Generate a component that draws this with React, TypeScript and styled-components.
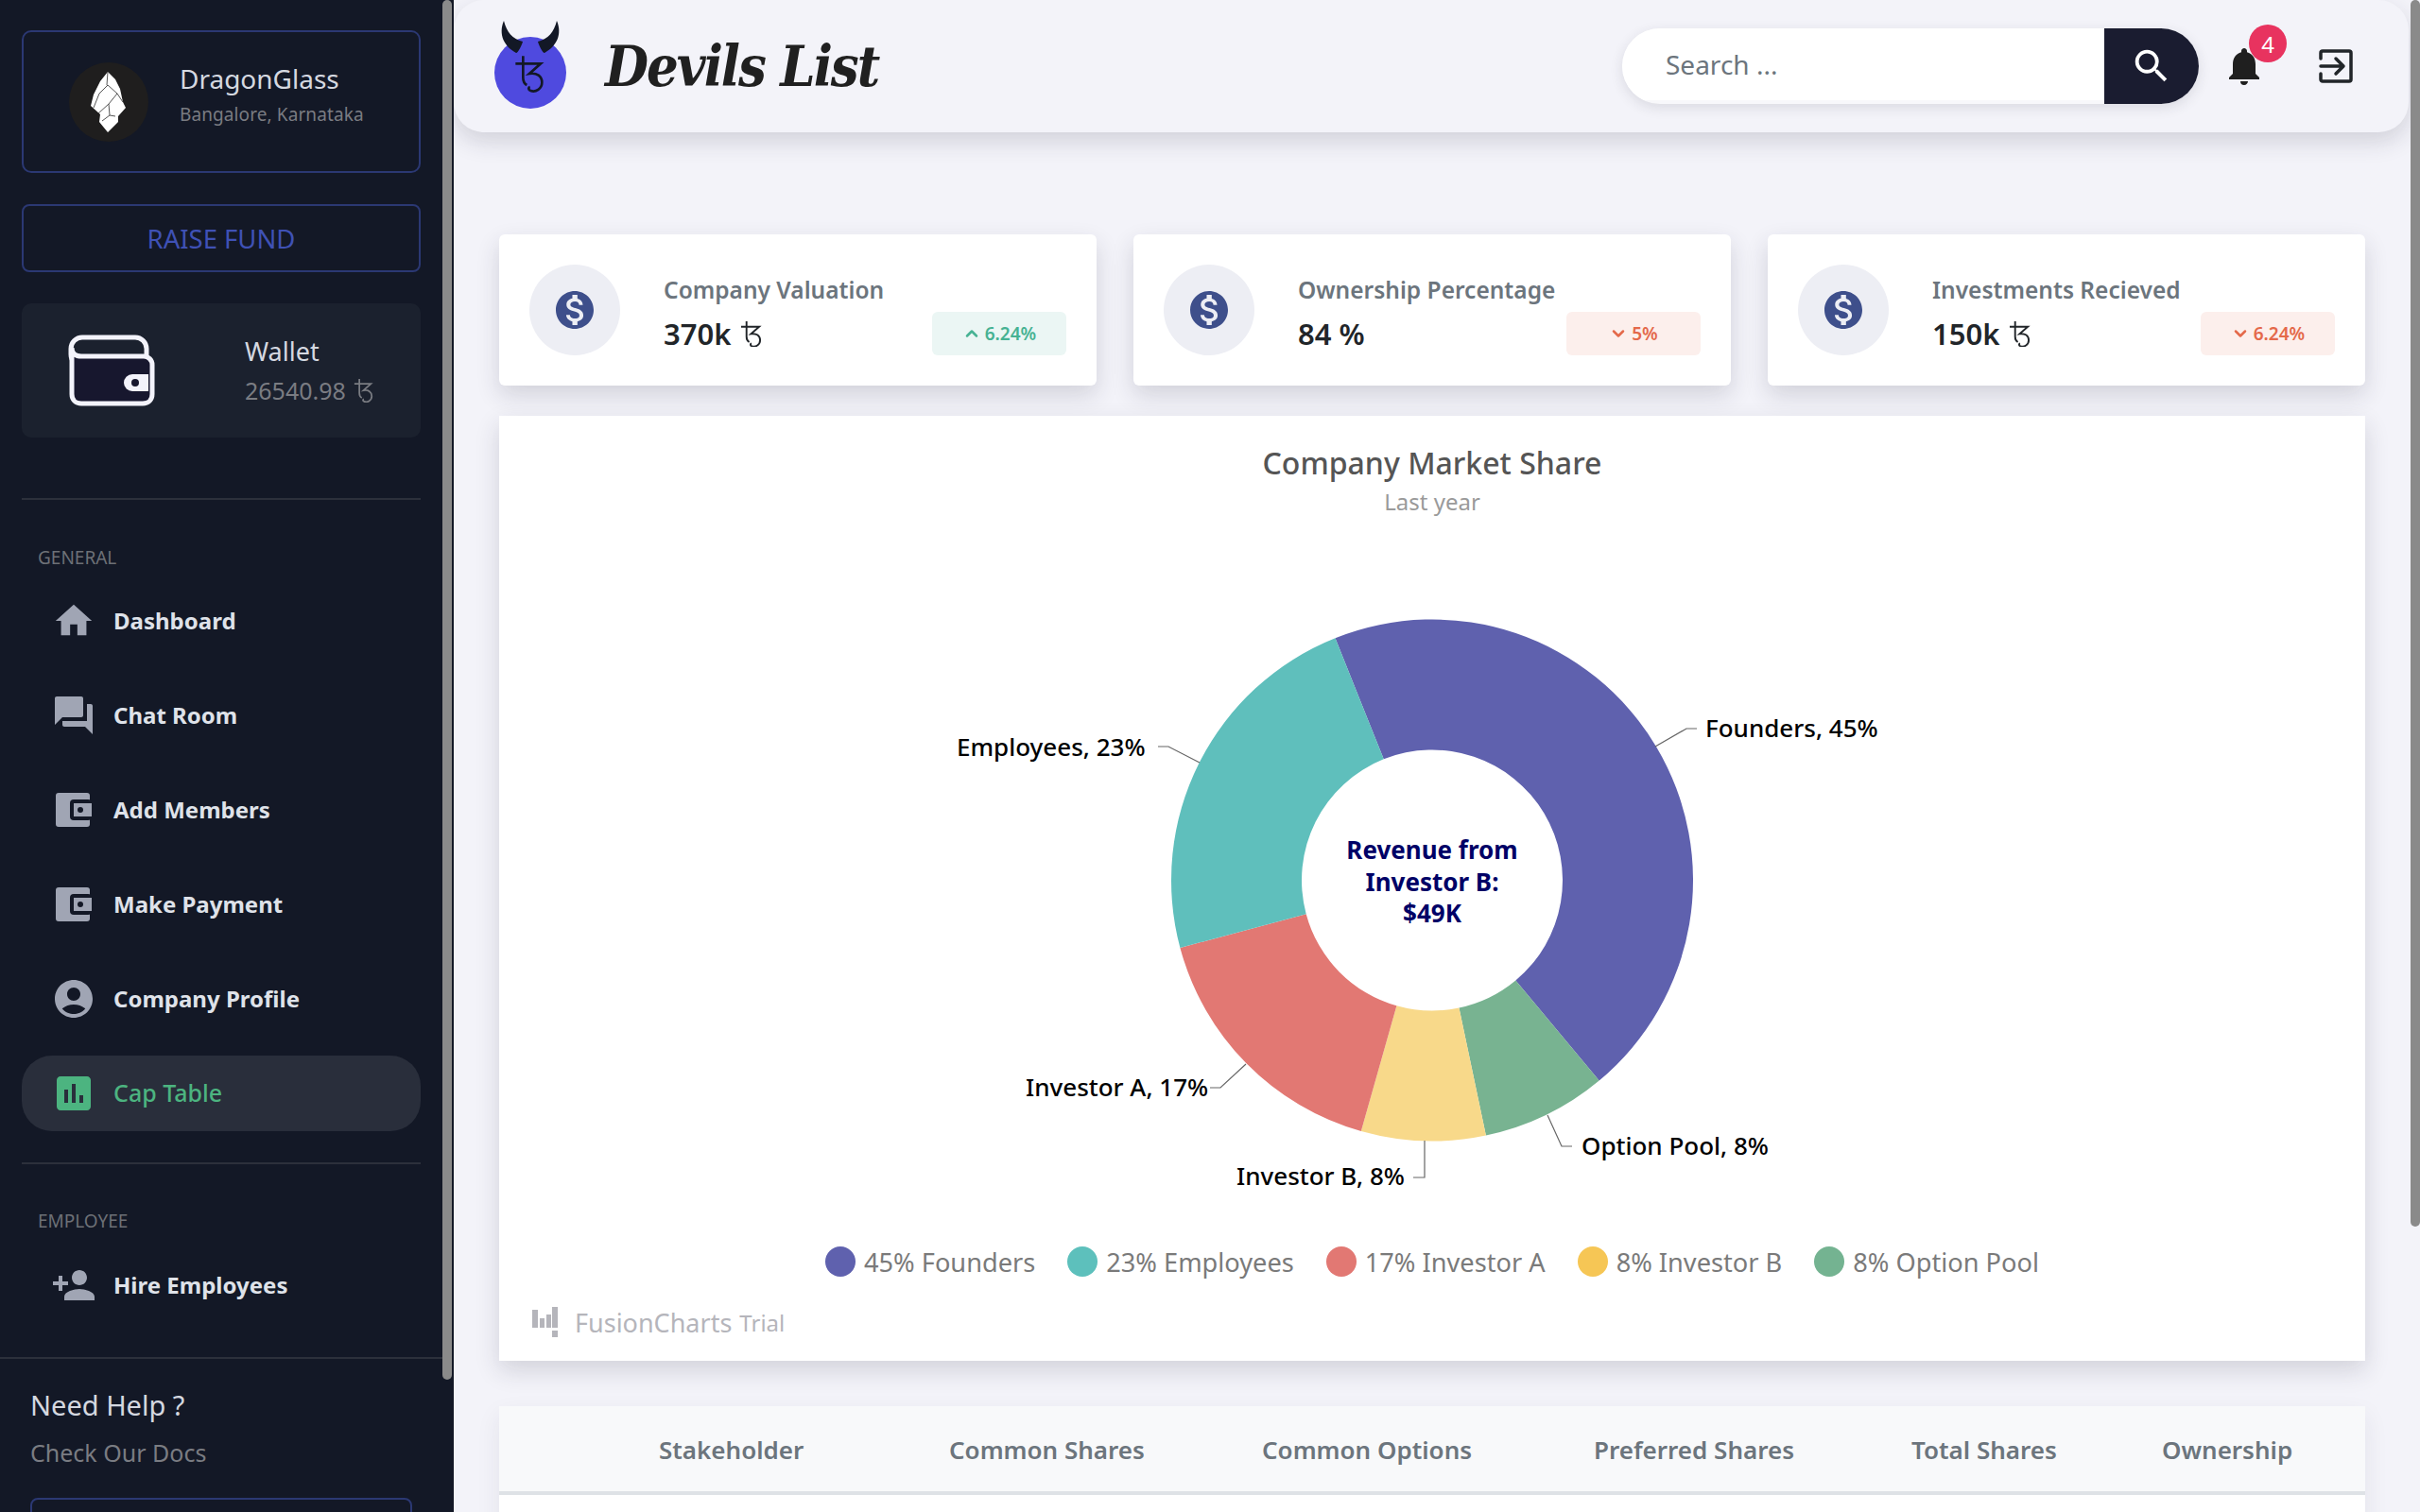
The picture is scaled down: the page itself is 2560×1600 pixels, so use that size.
import React from 'react'
import styled, { createGlobalStyle } from 'styled-components'
import { ChevronDown, ChevronUp } from 'lucide-react'
import {
  MdAccountCircle,
  MdAssessment,
  MdForum,
  MdHome,
  MdMonetizationOn,
  MdNotifications,
  MdPersonAdd,
  MdSearch
} from 'react-icons/md'

const colors = {
  sidebar: '#131826',
  page: '#f3f3f9',
  outline: '#2b3873',
  muted: '#7a7c82',
  soft: '#d5d8e0',
  navIcon: '#a0a5b4',
  green: '#4cb480',
  dark: '#212529',
  grey: '#6c757d'
}

const GlobalStyle = createGlobalStyle`
  html, body {
    margin: 0;
    height: 100%;
    overflow: hidden;
    background: ${colors.page};
    font-family: "Noto Sans", "Open Sans", sans-serif;
  }
  * { box-sizing: border-box; }
`

const Shell = styled.div`
  display: flex;
  height: 1600px;
  overflow: hidden;
`

const ScrollThumb = styled.div<{ $right: number; $height: number }>`
  position: absolute;
  top: 0;
  right: ${({ $right }) => $right}px;
  width: 10px;
  height: ${({ $height }) => $height}px;
  background: #8a8a8a;
  border-radius: 5px;
`

const Sidebar = styled.aside`
  position: relative;
  flex: 0 0 480px;
  height: 100%;
  overflow: hidden;
  background: ${colors.sidebar};
`

const SidebarTop = styled.div`
  padding: 32px 35px 0 23px;
`

const ProfileCard = styled.div`
  height: 151px;
  display: flex;
  align-items: center;
  gap: 33px;
  padding-left: 48px;
  border: 2px solid ${colors.outline};
  border-radius: 10px;
`

const Avatar = styled.div`
  width: 84px;
  height: 84px;
  flex: none;
  border-radius: 50%;
  background: #1f1e1e;
  display: flex;
  align-items: center;
  justify-content: center;
`

const ProfileText = styled.div`
  padding-bottom: 16px;
`

const ProfileName = styled.div`
  font-size: 28px;
  line-height: 36px;
  color: ${colors.soft};
`

const ProfilePlace = styled.div`
  font-size: 19px;
  line-height: 26px;
  margin-top: 7px;
  color: ${colors.muted};
  letter-spacing: 0.1px;
`

const OutlineButton = styled.button`
  display: block;
  width: 100%;
  height: 72px;
  background: transparent;
  border: 2px solid ${colors.outline};
  border-radius: 8px;
  color: #3f51b5;
  font-family: inherit;
  font-size: 27.5px;
`

const RaiseButton = styled(OutlineButton)`
  margin-top: 33px;
`

const WalletCard = styled.div`
  height: 142px;
  margin-top: 33px;
  display: flex;
  align-items: center;
  padding-left: 49px;
  gap: 95px;
  background: #1b212e;
  border-radius: 10px;
`

const WalletLabel = styled.div`
  font-size: 27px;
  line-height: 36px;
  color: ${colors.soft};
`

const WalletAmount = styled.div`
  display: flex;
  align-items: center;
  gap: 8px;
  font-size: 25px;
  line-height: 34px;
  margin-top: 6px;
  color: ${colors.muted};
`

const Divider = styled.hr`
  height: 2px;
  margin: 0;
  border: 0;
  background: #2c303b;
`

const TopDivider = styled(Divider)`
  margin-top: 64px;
`

const SectionLabel = styled.div<{ $top: number; $bottom: number }>`
  padding: ${({ $top }) => $top}px 17px ${({ $bottom }) => $bottom}px;
  font-size: 19px;
  line-height: 22px;
  color: #6d7076;
`

const NavRow = styled.a<{ $active?: boolean }>`
  height: 80px;
  margin-bottom: 20px;
  display: flex;
  align-items: center;
  gap: 22px;
  padding-left: 35px;
  border-radius: 32px;
  background: ${({ $active }) => ($active ? '#292e3b' : 'transparent')};
  color: ${({ $active }) => ($active ? colors.green : '#dfe2e9')};
  font-size: ${({ $active }) => ($active ? 25 : 24)}px;
  font-weight: ${({ $active }) => ($active ? 500 : 700)};
`

const NavText = styled.span`
  margin-top: -2px;
`

const NavIcon = styled.span<{ $active?: boolean }>`
  width: 40px;
  height: 40px;
  display: flex;
  align-items: center;
  justify-content: center;
  color: ${({ $active }) => ($active ? colors.green : colors.navIcon)};

  svg { flex: none; }
`

const DividerAfterNav = styled(Divider)`
  margin-top: 33px;
`

const FooterDivider = styled(Divider)`
  margin-top: 36px;
  margin-left: -23px;
  margin-right: -23px;
`

const SidebarFooter = styled.div`
  padding: 29px 44px 0 32px;
`

const HelpTitle = styled.div`
  font-size: 29px;
  line-height: 40px;
  color: ${colors.soft};
`

const HelpLink = styled.div`
  font-size: 25px;
  line-height: 36px;
  margin-top: 12px;
  color: ${colors.muted};
`

const DocsButton = styled(OutlineButton)`
  margin-top: 30px;
`

const Main = styled.main`
  position: relative;
  flex: 1;
  height: 100%;
  overflow: hidden;
  background: ${colors.page};
`

const Header = styled.header`
  height: 140px;
  margin-right: 12px;
  display: flex;
  align-items: center;
  padding: 0 59px 0 42px;
  background: ${colors.page};
  border-radius: 32px;
  box-shadow: 0 10px 24px rgba(40, 40, 60, 0.16);
`

const LogoTitle = styled.div`
  margin-left: 38px;
  font-family: "DejaVu Serif", serif;
  font-stretch: condensed;
  font-style: italic;
  font-weight: 700;
  font-size: 59px;
  letter-spacing: -2px;
  color: #202020;
`

const HeaderRight = styled.div`
  margin-left: auto;
  display: flex;
  align-items: center;
`

const SearchBox = styled.div`
  width: 610px;
  height: 80px;
  display: flex;
  border-radius: 40px;
  overflow: hidden;
  background: #f8f8fb;
  box-shadow: 0 4px 14px rgba(40, 40, 60, 0.12);
`

const SearchInput = styled.div`
  flex: 1;
  height: 76px;
  display: flex;
  align-items: center;
  padding-left: 46px;
  background: #fff;
  color: ${colors.grey};
  font-size: 28px;
`

const SearchButton = styled.div`
  width: 100px;
  display: flex;
  align-items: center;
  justify-content: center;
  background: #1a1c30;
  color: #fff;
`

const Bell = styled.div`
  position: relative;
  margin-left: 24px;
  height: 48px;
  color: #1f1f1f;
`

const BellBadge = styled.span`
  position: absolute;
  top: -20px;
  left: 29px;
  width: 40px;
  height: 40px;
  display: flex;
  align-items: center;
  justify-content: center;
  border-radius: 50%;
  background: #e8335f;
  color: #fff;
  font-size: 24px;
`

const ExitIcon = styled.svg`
  margin-left: 55px;
`

const Content = styled.div`
  padding: 108px 58px 0 48px;
`

const StatRow = styled.div`
  display: grid;
  grid-template-columns: repeat(3, 632px);
  justify-content: space-between;
`

const StatCard = styled.div`
  height: 160px;
  display: flex;
  align-items: center;
  padding: 0 32px;
  background: #fff;
  border-radius: 6px;
  box-shadow: 0 10px 24px rgba(40, 40, 60, 0.16);
`

const StatIcon = styled.div`
  width: 96px;
  height: 96px;
  flex: none;
  display: flex;
  align-items: center;
  justify-content: center;
  border-radius: 50%;
  background: #edeef4;
  color: #3e4f8b;
`

const StatBody = styled.div`
  flex: 1;
  margin-left: 46px;
  align-self: stretch;
  padding-top: 41px;
`

const StatTitle = styled.div`
  font-size: 24.5px;
  font-weight: 600;
  line-height: 36px;
  color: ${colors.grey};
`

const StatFoot = styled.div`
  display: flex;
  justify-content: space-between;
  align-items: flex-end;
  margin-top: 5px;
`

const StatValue = styled.div`
  display: flex;
  align-items: center;
  gap: 10px;
  margin-bottom: 3px;
  font-size: 31px;
  font-weight: 600;
  line-height: 40px;
  color: ${colors.dark};
`

const Trend = styled.div<{ $up?: boolean }>`
  width: 142px;
  height: 46px;
  display: flex;
  align-items: center;
  justify-content: center;
  gap: 4px;
  border-radius: 6px;
  background: ${({ $up }) => ($up ? '#ebf6f4' : '#fcefec')};
  color: ${({ $up }) => ($up ? '#46b293' : '#e4694a')};
  font-size: 19px;
  font-weight: 600;
`

const ChartCard = styled.section`
  height: 1000px;
  margin-top: 32px;
  padding-top: 30px;
  background: #fff;
  box-shadow: 0 10px 24px rgba(40, 40, 60, 0.16);
`

const ChartTitle = styled.h2`
  margin: 0;
  text-align: center;
  font-size: 32px;
  font-weight: 500;
  line-height: 40px;
  color: #555;
`

const ChartSubtitle = styled.div`
  margin-top: 6px;
  text-align: center;
  font-size: 24px;
  line-height: 30px;
  color: #9a9a9a;
`

const ChartCanvas = styled.svg`
  display: block;
  margin-top: 11px;
`

const SliceLabel = styled.text`
  font-family: "Noto Sans", sans-serif;
  font-size: 26px;
  font-weight: 500;
  fill: #000;
`

const CenterLabel = styled.text`
  font-family: "Noto Sans", sans-serif;
  font-size: 26px;
  font-weight: 700;
  fill: #000066;
  text-anchor: middle;
`

const Legend = styled.div`
  height: 36px;
  display: flex;
  justify-content: center;
  align-items: center;
  gap: 34px;
`

const LegendItem = styled.div`
  display: flex;
  align-items: center;
  gap: 9px;
  font-size: 27.2px;
  color: #7a7a7a;
`

const LegendDot = styled.span<{ $color: string }>`
  width: 32px;
  height: 32px;
  border-radius: 50%;
  background: ${({ $color }) => $color};
`

const Watermark = styled.div`
  margin-top: 28px;
  padding-left: 35px;
  display: flex;
  align-items: center;
  gap: 18px;
  height: 36px;
  color: #b5b5bb;
  font-size: 27px;
`

const WatermarkSmall = styled.span`
  margin-left: -10px;
  font-size: 24px;
`

const SharesTable = styled.section`
  min-height: 130px;
  margin-top: 48px;
  background: #fff;
  box-shadow: 0 10px 24px rgba(40, 40, 60, 0.08);
`

const TableHead = styled.div`
  height: 94px;
  display: grid;
  grid-template-columns: 307px 331px 351px 336px 265px 1fr;
  align-items: center;
  padding: 2px 0 0 169px;
  background: #f8f9fa;
  border-bottom: 4px solid #dee2e6;
`

const TableHeading = styled.div`
  font-size: 26px;
  font-weight: 600;
  color: ${colors.grey};
`

// tezos currency mark, used in a few sizes
const Tez = ({ size = 24, stroke = 'currentColor' }: { size?: number; stroke?: string }) => (
  <svg width={size} height={size * 1.25} viewBox="0 0 24 30" fill="none" stroke={stroke} strokeWidth="2">
    <path d="M7 1v17c0 3 1 5 3 6" />
    <path d="M1 7h20L12 15c6-1 10 2 10 7 0 5-5 8-9 6.5-2-.6-2-2.500-.5-3" />
  </svg>
)

const WalletGlyph = () => (
  <svg width="92" height="76" viewBox="0 0 92 76">
    <rect x="3" y="3" width="80" height="30" rx="12" fill="#1b212e" stroke="#f3f3fb" strokeWidth="5" />
    <path d="M4 14c0 6 4 9 10 9h66c5 0 9 4 9 9v31c0 6-4 10-10 10H14C8 73 4 69 4 63z" fill="#17172e" stroke="#f3f3fb" strokeWidth="5" />
    <path d="M85 42H68a9 9 0 0 0 0 18h17z" fill="#f3f3fb" />
    <circle cx="71" cy="51" r="4" fill="#17172e" />
  </svg>
)

const NavWallet = () => (
  <svg width="38" height="36" viewBox="0 0 38 36">
    <rect x="0" y="0" width="36" height="36" rx="3" fill={colors.navIcon} />
    <rect x="15" y="7" width="23" height="22" rx="4" fill={colors.sidebar} />
    <rect x="19" y="11" width="19" height="14" fill={colors.navIcon} />
    <circle cx="26" cy="18" r="3" fill={colors.sidebar} />
  </svg>
)

const Shard = () => (
  <svg width="38" height="64" viewBox="0 0 38 64">
    <path d="M18 0l8 8 5 10 3 14 3 6-8 9v6l-11 11-9-11 1-8-10-9 3-12 7-14z" fill="#fff" />
    <path d="M18 14l10 9-9 11 1 12 6 1M18 14L9 23 3 38M19 34L8 44M20 46l-8 6M18 0l-1 14M28 23l6 9" fill="none" stroke="#555" strokeWidth="1" />
  </svg>
)

const DevilLogo = () => (
  <svg width="80" height="104" viewBox="0 0 80 104">
    <circle cx="39" cy="59" r="38" fill="#4f4adf" />
    <path d="M11 4C5 18 11 31 24 38c2 0 6-8 7-12C20 23 14 16 11 4z" fill="#131826" />
    <path d="M67 4C73 18 67 31 54 38c-2 0-6-8-7-12C58 23 64 16 67 4z" fill="#131826" />
    <g transform="translate(22 40)">
      <Tez size={32} stroke="#131826" />
    </g>
  </svg>
)

const polar = (r: number, deg: number): string => {
  const rad = (deg * Math.PI) / 180
  return `${(1515 + r * Math.sin(rad)).toFixed(2)} ${(931.5 - r * Math.cos(rad)).toFixed(2)}`
}

const slicePath = (from: number, to: number): string => {
  const large = to - from > 180 ? 1 : 0
  return `M${polar(276, from)}A276 276 0 ${large} 1 ${polar(276, to)}L${polar(138, to)}A138 138 0 ${large} 0 ${polar(138, from)}Z`
}

const slices = [
  { color: '#5f61ae', from: -21.8, to: 140.2 },
  { color: '#78b391', from: 140.2, to: 168.1 },
  { color: '#f8d98a', from: 168.1, to: 195.8 },
  { color: '#e27873', from: 195.8, to: 255 },
  { color: '#5fbfbc', from: 255, to: 338.2 }
]

const callouts = [
  { text: 'Founders, 45%', x: 1804, y: 780, line: '1751,790 1784,771 1795,771' },
  { text: 'Employees, 23%', x: 1012, y: 800, line: '1225,790 1236,790 1269,807' },
  { text: 'Investor A, 17%', x: 1085, y: 1160, line: '1280,1151 1291,1151 1318,1126' },
  { text: 'Investor B, 8%', x: 1308, y: 1254, line: '1495,1246 1507,1246 1507,1207' },
  { text: 'Option Pool, 8%', x: 1673, y: 1222, line: '1663,1213 1652,1213 1637,1180' }
]

const legend = [
  { color: '#5f61ae', label: '45% Founders' },
  { color: '#5dc0bc', label: '23% Employees' },
  { color: '#e27873', label: '17% Investor A' },
  { color: '#f6c655', label: '8% Investor B' },
  { color: '#74b391', label: '8% Option Pool' }
]

const stats = [
  { title: 'Company Valuation', value: '370k', tez: true, change: '6.24%', up: true },
  { title: 'Ownership Percentage', value: '84 %', tez: false, change: '5%', up: false },
  { title: 'Investments Recieved', value: '150k', tez: true, change: '6.24%', up: false }
]

const columns = ['Stakeholder', 'Common Shares', 'Common Options', 'Preferred Shares', 'Total Shares', 'Ownership']

const App: React.FC = () => (
  <>
    <GlobalStyle />
    <Shell>
      <Sidebar>
        <SidebarTop>
          <ProfileCard>
            <Avatar>
              <Shard />
            </Avatar>
            <ProfileText>
              <ProfileName>DragonGlass</ProfileName>
              <ProfilePlace>Bangalore, Karnataka</ProfilePlace>
            </ProfileText>
          </ProfileCard>
          <RaiseButton>RAISE FUND</RaiseButton>
          <WalletCard>
            <WalletGlyph />
            <div>
              <WalletLabel>Wallet</WalletLabel>
              <WalletAmount>
                26540.98 <Tez size={21} />
              </WalletAmount>
            </div>
          </WalletCard>
          <TopDivider />
          <SectionLabel $top={50} $bottom={16}>GENERAL</SectionLabel>
          <NavRow>
            <NavIcon><MdHome size={46} /></NavIcon>
            <NavText>Dashboard</NavText>
          </NavRow>
          <NavRow>
            <NavIcon><MdForum size={48} /></NavIcon>
            <NavText>Chat Room</NavText>
          </NavRow>
          <NavRow>
            <NavIcon><NavWallet /></NavIcon>
            <NavText>Add Members</NavText>
          </NavRow>
          <NavRow>
            <NavIcon><NavWallet /></NavIcon>
            <NavText>Make Payment</NavText>
          </NavRow>
          <NavRow>
            <NavIcon><MdAccountCircle size={48} /></NavIcon>
            <NavText>Company Profile</NavText>
          </NavRow>
          <NavRow $active>
            <NavIcon $active><MdAssessment size={48} /></NavIcon>
            <NavText>Cap Table</NavText>
          </NavRow>
          <DividerAfterNav />
          <SectionLabel $top={49} $bottom={17}>EMPLOYEE</SectionLabel>
          <NavRow>
            <NavIcon><MdPersonAdd size={48} /></NavIcon>
            <NavText>Hire Employees</NavText>
          </NavRow>
          <FooterDivider />
        </SidebarTop>
        <SidebarFooter>
          <HelpTitle>Need Help ?</HelpTitle>
          <HelpLink>Check Our Docs</HelpLink>
          <DocsButton />
        </SidebarFooter>
        <ScrollThumb $right={2} $height={1460} />
      </Sidebar>
      <Main>
        <Header>
          <DevilLogo />
          <LogoTitle>Devils List</LogoTitle>
          <HeaderRight>
            <SearchBox>
              <SearchInput>Search ...</SearchInput>
              <SearchButton><MdSearch size={46} /></SearchButton>
            </SearchBox>
            <Bell>
              <MdNotifications size={48} />
              <BellBadge>4</BellBadge>
            </Bell>
            <ExitIcon width="36" height="36" viewBox="0 0 36 36" fill="none" stroke="#212529" strokeWidth="3.5" strokeLinecap="round" strokeLinejoin="round">
              <path d="M2 10V4a2 2 0 0 1 2-2h28a2 2 0 0 1 2 2v28a2 2 0 0 1-2 2H4a2 2 0 0 1-2-2v-6" />
              <path d="M2 18h23M18 10l8 8-8 8" />
            </ExitIcon>
          </HeaderRight>
        </Header>
        <Content>
          <StatRow>
            {stats.map((stat) => (
              <StatCard key={stat.title}>
                <StatIcon><MdMonetizationOn size={48} /></StatIcon>
                <StatBody>
                  <StatTitle>{stat.title}</StatTitle>
                  <StatFoot>
                    <StatValue>
                      {stat.value}
                      {stat.tez && <Tez size={23} />}
                    </StatValue>
                    <Trend $up={stat.up}>
                      {stat.up ? <ChevronUp size={20} strokeWidth={3} /> : <ChevronDown size={20} strokeWidth={3} />}
                      {stat.change}
                    </Trend>
                  </StatFoot>
                </StatBody>
              </StatCard>
            ))}
          </StatRow>
          <ChartCard>
            <ChartTitle>Company Market Share</ChartTitle>
            <ChartSubtitle>Last year</ChartSubtitle>
            <ChartCanvas width="1974" height="760" viewBox="528 557 1974 760">
              {slices.map((slice) => (
                <path key={slice.color} d={slicePath(slice.from, slice.to)} fill={slice.color} />
              ))}
              {callouts.map((callout) => (
                <g key={callout.text}>
                  <polyline points={callout.line} fill="none" stroke="#666" strokeWidth="1.2" />
                  <SliceLabel x={callout.x} y={callout.y}>{callout.text}</SliceLabel>
                </g>
              ))}
              <CenterLabel x="1515" y="909">Revenue from</CenterLabel>
              <CenterLabel x="1515" y="943">Investor B:</CenterLabel>
              <CenterLabel x="1515" y="976">$49K</CenterLabel>
            </ChartCanvas>
            <Legend>
              {legend.map((item) => (
                <LegendItem key={item.label}>
                  <LegendDot $color={item.color} />
                  {item.label}
                </LegendItem>
              ))}
            </Legend>
            <Watermark>
              <svg width="27" height="32" viewBox="0 0 27 32" fill="#b5b5bb">
                <rect x="0" y="3" width="6" height="19" />
                <rect x="8" y="12" width="5" height="10" />
                <rect x="15" y="8" width="5" height="14" />
                <rect x="21" y="0" width="6" height="22" />
                <rect x="21" y="25" width="6" height="7" />
              </svg>
              FusionCharts
              <WatermarkSmall>Trial</WatermarkSmall>
            </Watermark>
          </ChartCard>
          <SharesTable>
            <TableHead>
              {columns.map((column) => (
                <TableHeading key={column}>{column}</TableHeading>
              ))}
            </TableHead>
          </SharesTable>
        </Content>
        <ScrollThumb $right={0} $height={1298} />
      </Main>
    </Shell>
  </>
)

export default App
